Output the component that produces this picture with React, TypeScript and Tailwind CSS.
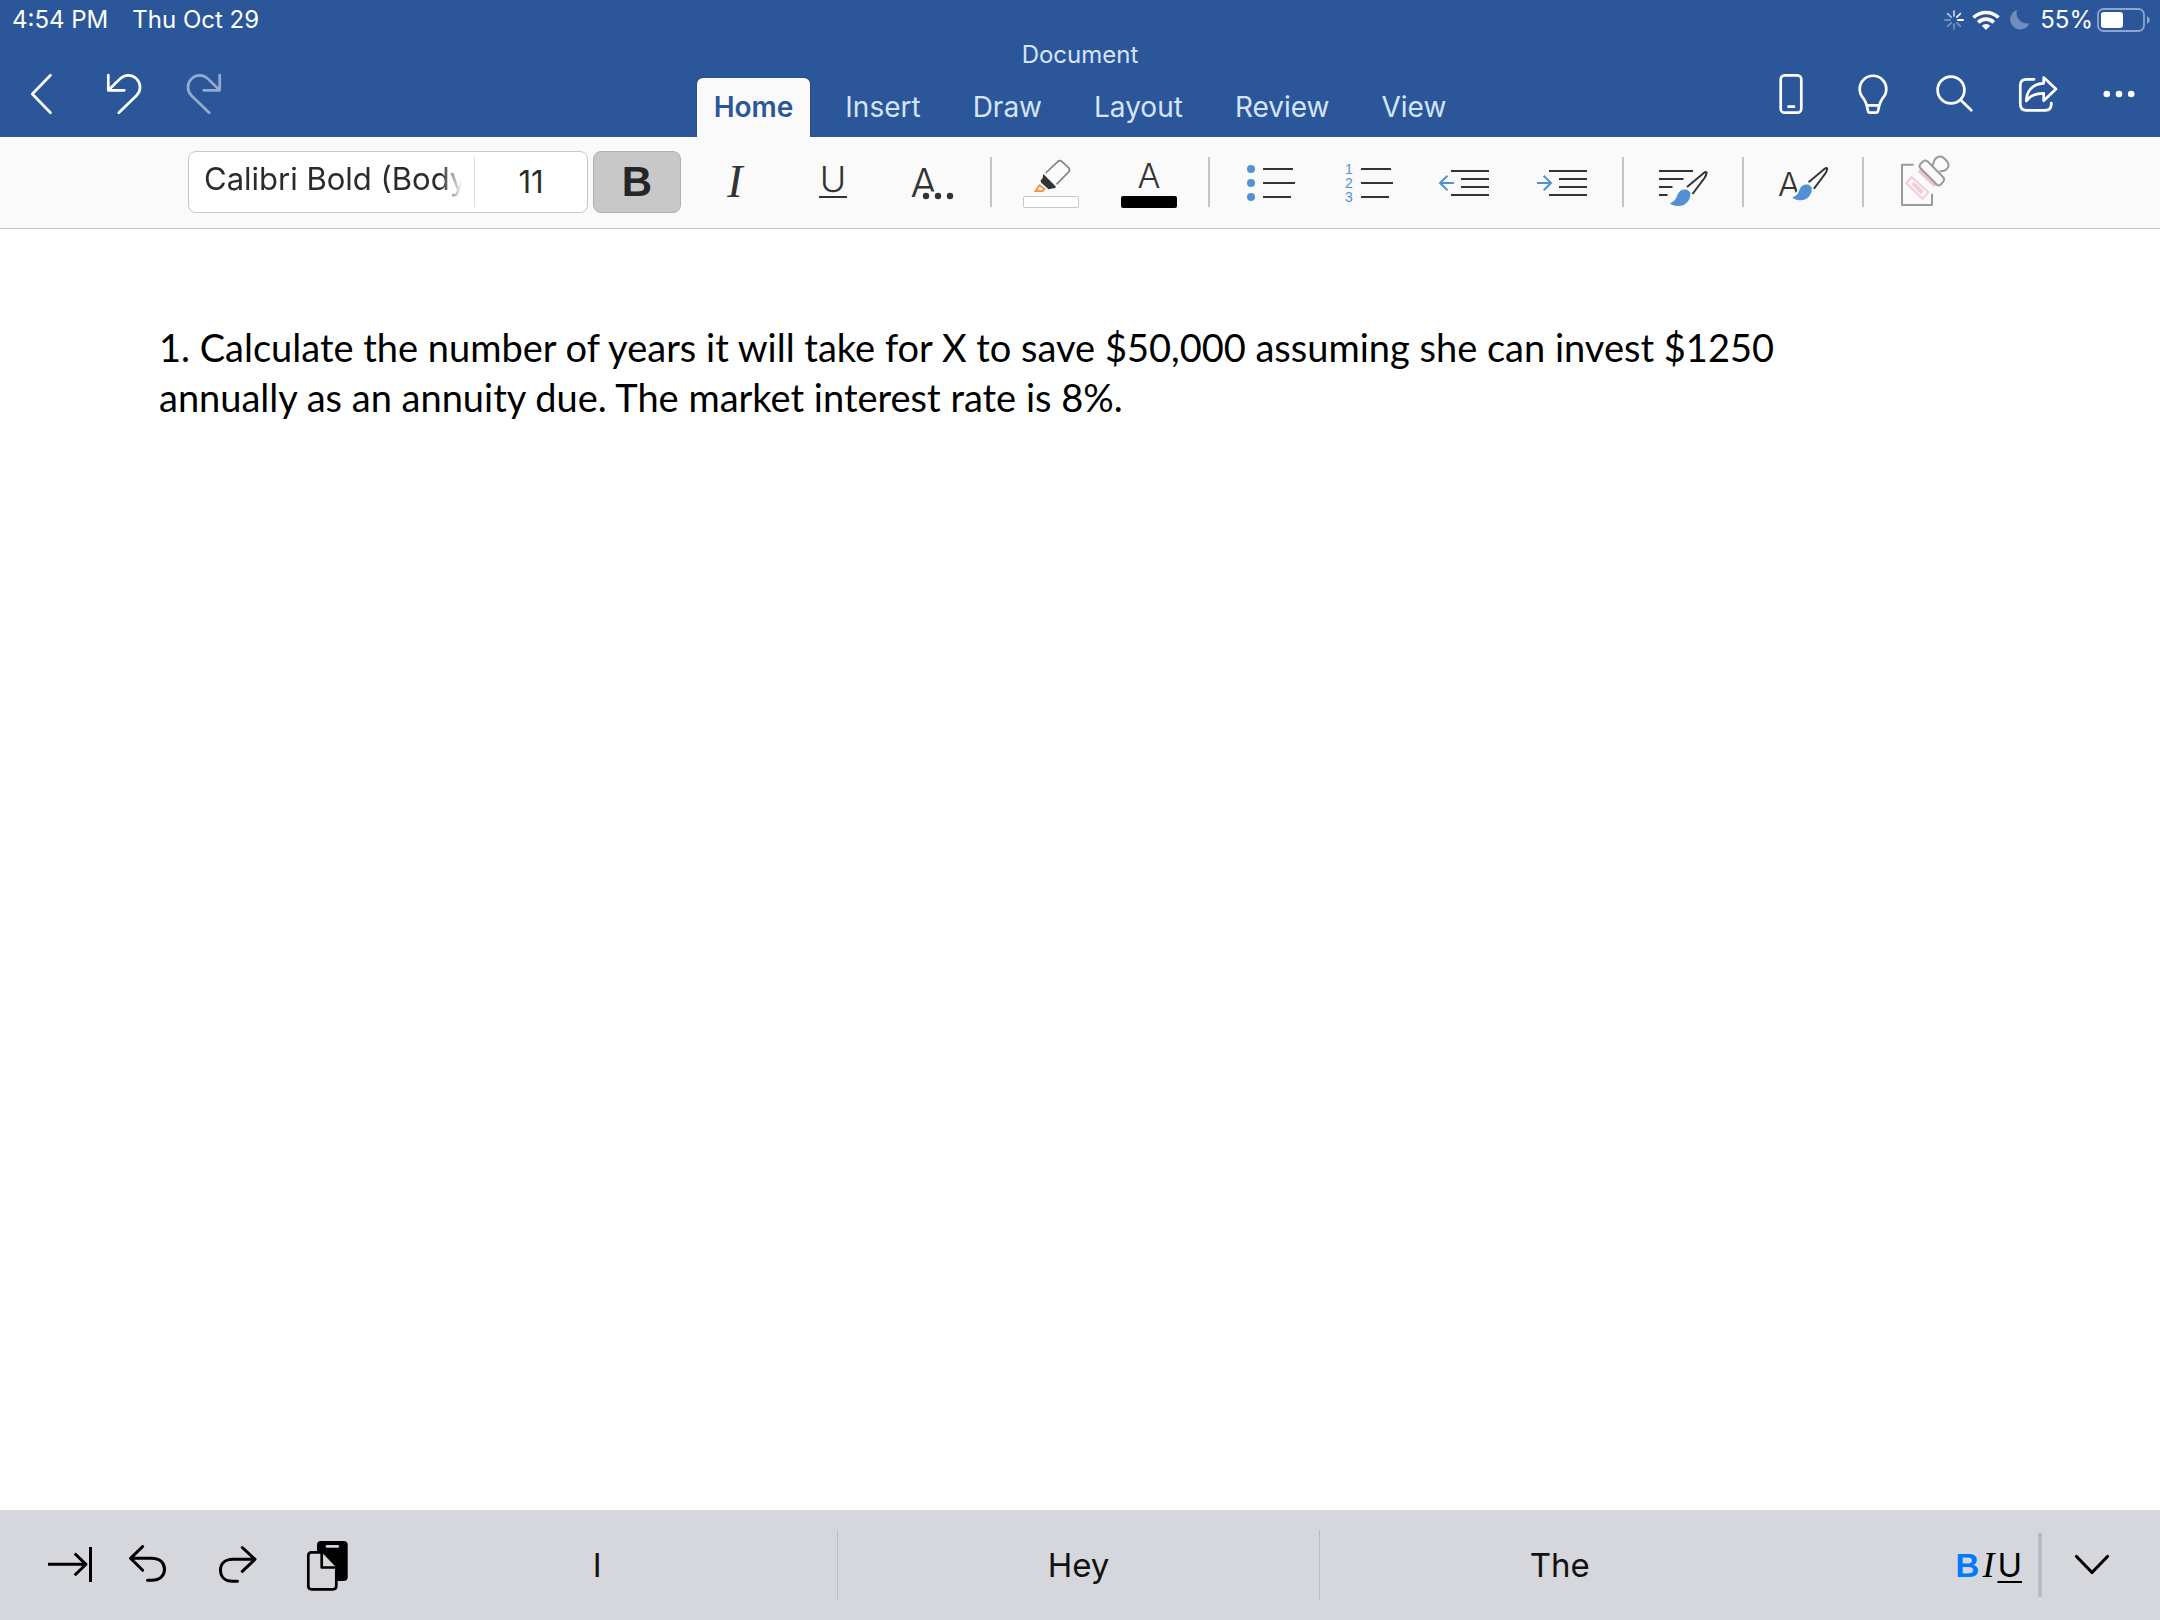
import type { ReactNode } from "react"

const tabs = ["Home", "Insert", "Draw", "Layout", "Review", "View"]
const suggestions = ["I", "Hey", "The"]

function NavButton({ label, disabled, children }: { label: string; disabled?: boolean; children: ReactNode }) {
    return (
        <button aria-label={label} disabled={disabled} className="flex h-[82px] w-[82px] items-center justify-center disabled:opacity-50">
            <svg
                viewBox="0 0 40 40"
                className="h-10 w-10 overflow-visible"
                fill="none"
                stroke="#fff"
                strokeWidth="2.7"
                strokeLinecap="round"
                strokeLinejoin="round"
            >
                {children}
            </svg>
        </button>
    )
}

function ToolButton({ label, children }: { label: string; children: ReactNode }) {
    return (
        <button aria-label={label} className="h-[62px] w-[88px] shrink-0">
            <svg viewBox="0 0 88 62" className="h-full w-full" fill="none" stroke="#333" strokeWidth="2">
                {children}
            </svg>
        </button>
    )
}

function KeyIcon({ children }: { children: ReactNode }) {
    return (
        <svg
            viewBox="0 0 48 48"
            className="h-12 w-12 overflow-visible"
            fill="none"
            stroke="#000"
            strokeWidth="3"
            strokeLinecap="round"
            strokeLinejoin="round"
        >
            {children}
        </svg>
    )
}

function Separator() {
    return <div className="mx-[5px] h-[50px] w-0.5 shrink-0 bg-[#c4c4c4]" />
}

function Brush() {
    return (
        <>
            <path d="M48 36 L64.5 22.2 Q67.8 20 67.6 22 Q67.2 24.5 65.5 27 L53.5 43" />
            <path
                d="M30.8 52.2 C36 50.5 37 47.5 38.5 43.8 C40.2 39.5 44 37.7 48.2 38.8 L51.2 41.2 C52.3 48.5 47 55.5 38.5 55 C35.5 55 33 54 30.8 52.2Z"
                fill="#5291d3"
                stroke="none"
            />
        </>
    )
}

function StatusBar() {
    return (
        <div className="flex h-10 items-center justify-between pl-3 pr-[10px] text-[24px] leading-10 text-white">
            <div className="flex gap-6">
                <span>4:54 PM</span>
                <span>Thu Oct 29</span>
            </div>
            <div className="flex items-center gap-1">
                <svg viewBox="0 0 20 20" className="mr-1 h-5 w-5" stroke="#fff" strokeWidth="1.7" strokeLinecap="round">
                    <path d="M10 1V6" opacity=".75" />
                    <path d="M16.4 3.6L12.8 7.2" opacity=".9" />
                    <path d="M14 10H19" strokeWidth="2" />
                    <path d="M12.8 12.8L16.4 16.4M10 14V19M7.2 12.8L3.6 16.4" opacity=".35" />
                    <path d="M6 10H1" opacity=".45" />
                    <path d="M7.2 7.2L3.6 3.6" opacity=".6" />
                </svg>
                <svg viewBox="0 0 28 20" className="h-5 w-7" fill="none" stroke="#fff" strokeWidth="3.6">
                    <path d="M1.5 7.6A17.7 17.7 0 0 1 26.5 7.6" />
                    <path d="M6.2 12.4A11 11 0 0 1 21.8 12.4" />
                    <path d="M14 20L9.8 15.8A6 6 0 0 1 18.2 15.8Z" fill="#fff" stroke="none" />
                </svg>
                <svg viewBox="0 0 20 20" className="mx-1.5 h-5 w-5" fill="#6f8dbd">
                    <path d="M7 0A10 10 0 1 0 19.5 13.2A10.5 10.5 0 0 1 7 0Z" />
                </svg>
                <span>55%</span>
                <svg viewBox="0 0 53 24" className="h-6 w-[53px]">
                    <rect x="1" y="1" width="46" height="22" rx="5.5" fill="none" stroke="#8ca5cc" strokeWidth="1.8" />
                    <rect x="4" y="4" width="22" height="16" rx="3" fill="#fff" />
                    <path d="M50 8Q52.8 9.5 52.8 12T50 16Z" fill="#8ca5cc" />
                </svg>
            </div>
        </div>
    )
}

function Header() {
    return (
        <header className="bg-[#2b579a]">
            <StatusBar />
            <div className="grid h-[97px] grid-cols-[1fr_auto_1fr]">
                <div className="flex pt-[13px]">
                    <NavButton label="Back">
                        <path d="M29.5 1.3L11.3 20L29.5 38.7" />
                    </NavButton>
                    <NavButton label="Undo">
                        <path d="M5.3 1V16.3H21.3M5.3 16.3L17 4.9A11.7 11.7 0 1 1 33.6 21.5L15.8 38.7" />
                    </NavButton>
                    <NavButton label="Redo" disabled>
                        <path d="M34.7 1V16.3H18.7M34.7 16.3L23 4.9A11.7 11.7 0 1 0 6.4 21.5L24.2 38.7" />
                    </NavButton>
                </div>
                <div className="flex flex-col items-center">
                    <h1 className="h-[38px] text-[24px] leading-[30px] text-[#d5e4fb]">Document</h1>
                    <nav className="flex gap-[18px]">
                        {tabs.map((tab) => (
                            <a
                                key={tab}
                                href="#"
                                className={
                                    tab === "Home"
                                        ? "h-[59px] rounded-t-md bg-[#fafafa] px-[17px] text-[28px] font-semibold leading-[58px] text-[#2b579a] shadow-[0_0_2px_#1c3f78]"
                                        : "h-[59px] px-[17px] text-[28px] leading-[58px] text-[#d5e4fb]"
                                }
                            >
                                {tab}
                            </a>
                        ))}
                    </nav>
                </div>
                <div className="flex justify-end pt-[13px]">
                    <NavButton label="Mobile view">
                        <rect x="9.7" y="1.3" width="20.6" height="37.4" rx="4" />
                        <path d="M17.5 32.7H23" />
                    </NavButton>
                    <NavButton label="Tell me">
                        <path d="M13.7 31.3C13 28 11.5 26 10 23.8A13.3 13.3 0 1 1 30 23.8C28.5 26 27 28 26.3 31.3L25 37Q24.6 38.7 23 38.7H17Q15.4 38.7 15 37ZM13.7 31.3H26.3" />
                    </NavButton>
                    <NavButton label="Search">
                        <circle cx="16" cy="16" r="13.4" />
                        <path d="M25.7 26L36.3 36.3" />
                    </NavButton>
                    <NavButton label="Share">
                        <path d="M17 5.3H9.3Q3.3 5.3 3.3 11.3V30.3Q3.3 36.3 9.3 36.3H28.3Q34.3 36.3 34.3 30.3V29" />
                        <path d="M26.7 3.6L39 15L26.7 26.8V19.3C19 19.3 13 21.5 9.3 27C9.5 17 15.5 9.8 26.7 9.3Z" />
                    </NavButton>
                    <NavButton label="More">
                        <g fill="#fff" stroke="none">
                            <circle cx="7.8" cy="20" r="3.3" />
                            <circle cx="20" cy="20" r="3.3" />
                            <circle cx="32.2" cy="20" r="3.3" />
                        </g>
                    </NavButton>
                </div>
            </div>
        </header>
    )
}

function Toolbar() {
    return (
        <div className="flex h-[92px] items-center gap-[10px] border-b border-[#c8c8c8] bg-[#fafafa] pb-px pl-[188px]">
            <div className="-mr-[5px] flex h-[62px] w-[400px] shrink-0 items-center rounded-lg border border-[#c8c8c8] bg-white text-[31px] text-[#2b2b2b]">
                <button
                    aria-label="Font"
                    className="ml-[15px] h-full w-[258px] whitespace-nowrap pb-1.5 text-left [mask-image:linear-gradient(to_right,#000_92%,transparent)]"
                >
                    Calibri Bold (Body
                </button>
                <button aria-label="Font size" className="ml-3 h-[50px] flex-1 border-l border-[#dedede]">
                    11
                </button>
            </div>
            <button
                aria-pressed="true"
                className="h-[62px] w-[88px] shrink-0 rounded-lg border border-[#b0b0b0] bg-[#c8c8c8] font-['Liberation_Sans',sans-serif] text-[42px] font-bold leading-[60px] text-[#262626]"
            >
                B
            </button>
            <ToolButton label="Italic">
                <text x="44" y="46" textAnchor="middle" fontSize="46" fontStyle="italic" fontFamily="Liberation Serif, serif" fill="#333" stroke="none">
                    I
                </text>
            </ToolButton>
            <ToolButton label="Underline">
                <text x="44" y="41" textAnchor="middle" fontSize="36" fontWeight="300" fill="#333" stroke="none">
                    U
                </text>
                <path d="M30 46H58" />
            </ToolButton>
            <ToolButton label="More formatting">
                <text x="37" y="46" textAnchor="middle" fontSize="40" fontWeight="300" fill="#333" stroke="none">
                    A
                </text>
                <path d="M35 44H54" stroke="#fafafa" strokeWidth="7" />
                <g fill="#333" stroke="none">
                    <circle cx="39" cy="45" r="3.2" />
                    <circle cx="51" cy="45" r="3.2" />
                    <circle cx="63" cy="45" r="3.2" />
                </g>
            </ToolButton>
            <Separator />
            <ToolButton label="Highlight">
                <path d="M38.7 22L51 10.3Q53 9 55 10.7L61.5 16.5Q63.3 18.5 62 20.5L49.5 33.3" stroke="#808080" strokeWidth="1.7" />
                <path d="M36.3 23L49 35.8L48 37L41.5 38.3L33.8 31.3V29L35.5 27.5Z" fill="#333" stroke="none" />
                <path d="M32.5 34.3L28.5 40H35.7L37.5 38Z" stroke="#f4954a" strokeWidth="1.8" />
                <rect x="16.5" y="45.5" width="55" height="11" rx="1.5" fill="#fff" stroke="#c8c8c8" strokeWidth="1" />
            </ToolButton>
            <ToolButton label="Font color">
                <text x="44" y="37" textAnchor="middle" fontSize="34" fontWeight="300" fill="#333" stroke="none">
                    A
                </text>
                <rect x="16" y="45" width="56" height="12" rx="2" fill="#000" stroke="none" />
            </ToolButton>
            <Separator />
            <ToolButton label="Bullets">
                <g fill="#5291d3" stroke="none">
                    <circle cx="26" cy="18" r="4" />
                    <circle cx="26" cy="32" r="4" />
                    <circle cx="26" cy="46" r="4" />
                </g>
                <path d="M38 18H68M38 32H70M38 46H66" />
            </ToolButton>
            <ToolButton label="Numbering">
                <g fill="#5291d3" stroke="none" fontSize="14" textAnchor="middle" fontFamily="Liberation Sans, sans-serif">
                    <text x="26" y="23">1</text>
                    <text x="26" y="37">2</text>
                    <text x="26" y="51">3</text>
                </g>
                <path d="M38 18H68M38 32H70M38 46H66" />
            </ToolButton>
            <ToolButton label="Decrease indent">
                <path d="M30 20H68M40 28H68M40 36H68M30 44H68" />
                <path d="M33 32H19M26.5 24.7L19 32L26.5 39.3" stroke="#5291d3" />
            </ToolButton>
            <ToolButton label="Increase indent">
                <path d="M30 20H68M40 28H68M40 36H68M30 44H68" />
                <path d="M18 32H32M24.7 24.7L32 32L24.7 39.3" stroke="#5291d3" />
            </ToolButton>
            <Separator />
            <ToolButton label="Paragraph formatting">
                <path d="M20 20H54M20 28H44.5M20 36H33.5M20 44H28.5" />
                <Brush />
            </ToolButton>
            <Separator />
            <ToolButton label="Styles">
                <text x="30" y="45" textAnchor="middle" fontSize="33" fontWeight="300" fill="#333" stroke="none">
                    A
                </text>
                <g transform="translate(4 -3) scale(.95)">
                    <path d="M30 52C35 50 37 47 38.5 43.8C40 39.5 44 37 49 38.5V47H38Z" fill="#fafafa" stroke="#fafafa" strokeWidth="3" />
                    <Brush />
                </g>
            </ToolButton>
            <Separator />
            <ToolButton label="Format painter">
                <g stroke="#9a9a9a" strokeLinejoin="round">
                    <path d="M34.6 13.7H23V54H53V42.7" />
                    <path d="M32.6 26L49.3 41.3L43.6 47.7L27.3 32.3Z" stroke="#f3cdd6" />
                    <path d="M35 30.7L44.7 40.3L41.8 43L32.3 33.3Z" fill="#f3cdd6" stroke="none" />
                    <path d="M41.5 17.3L57.8 33.3L55 36L38.8 20.7Z" fill="#f0c3ce" stroke="none" />
                    <path d="M41.3 17L58 33.8Q60 35.3 61.5 33.8L64.5 30.3Q66 28 64 26L48.5 10.3Q46.5 8.7 44.5 10L41.3 13Q39.8 15 41.3 17Z" />
                    <path d="M53.5 15L55.3 9.5Q56 7.5 58 6.5Q61.5 4.3 64.5 6.7L68 10.3Q71 14 68.3 17.3Q67 19.3 65 19.7L60.5 20.5" />
                </g>
            </ToolButton>
        </div>
    )
}

function KeyboardBar() {
    return (
        <footer className="flex h-[110px] items-center bg-[#d5d7dc] text-black">
            <button aria-label="Tab" className="ml-[38px] flex w-16 justify-center">
                <KeyIcon>
                    <path d="M2 23.3H40M28.7 12.5L40 23.3L28.7 34.3M44.5 6V41" strokeLinecap="butt" />
                </KeyIcon>
            </button>
            <button aria-label="Undo typing" className="flex w-[90px] justify-center">
                <KeyIcon>
                    <path d="M19.7 5.5L7.5 17.3L19.7 29.3M7.5 17.3H28.7C37 17.3 41.5 22 41.5 28.3S37 39.3 28.7 39.3H24.5" />
                </KeyIcon>
            </button>
            <button aria-label="Redo typing" className="flex w-[90px] justify-center">
                <KeyIcon>
                    <path d="M29.3 6.5L42 18.3L29.3 30.3M42 18.3H20C11.7 18.3 7.5 23 7.5 29.3S11.7 40.3 20 40.3H24.5" />
                </KeyIcon>
            </button>
            <button aria-label="Paste" className="flex w-[75px] justify-end pr-[6px]">
                <KeyIcon>
                    <rect x="14" y="0" width="30.7" height="40" rx="4" fill="#000" stroke="none" />
                    <path d="M24 5.4H34.7" stroke="#d5d7dc" strokeWidth="2.6" />
                    <path d="M18.7 11.3L33.3 26.5V45Q33.3 48.3 30 48.3H8.6Q5.3 48.3 5.3 45V14.6Q5.3 11.3 8.6 11.3Z" fill="#d5d7dc" stroke="none" />
                    <path d="M18.7 11.3H8.6Q5.3 11.3 5.3 14.6V45Q5.3 48.3 8.6 48.3H30Q33.3 48.3 33.3 45V26.5H18.7V11.3" strokeWidth="2.7" />
                </KeyIcon>
            </button>
            <div className="flex flex-1 divide-x divide-[#bcbec3]">
                {suggestions.map((word) => (
                    <button key={word} className="h-[70px] flex-1 pt-0.5 text-[33px] text-[#111]">
                        {word}
                    </button>
                ))}
            </div>
            <div className="flex w-[360px] items-center justify-end">
                <button aria-label="Text style" className="mr-4 flex items-baseline gap-[3px] text-[33px] leading-10">
                    <b className="font-['Liberation_Sans',sans-serif] text-[#007aff]">B</b>
                    <i className="font-['Liberation_Serif',serif] text-[36px]">I</i>
                    <u className="decoration-2 underline-offset-4">U</u>
                </button>
                <div className="h-16 w-1 bg-[#bbbcc1]" />
                <button aria-label="Hide keyboard" className="flex w-[118px] justify-center pr-[18px]">
                    <KeyIcon>
                        <path d="M8.5 15.5L24 31.5L39.5 15.5" strokeWidth="3.2" />
                    </KeyIcon>
                </button>
            </div>
        </footer>
    )
}

export default function App() {
    return (
        <div className="flex min-h-screen flex-col bg-white font-['Inter',sans-serif]">
            <Header />
            <Toolbar />
            <main className="flex-1 px-[159px] pt-[93px]">
                <p className="font-['Lato',sans-serif] text-[38px] leading-[50px] text-black">
                    1. Calculate the number of years it will take for X to save $50,000 assuming she can invest $1250
                    <br />
                    annually as an annuity due. The market interest rate is 8%.
                </p>
            </main>
            <KeyboardBar />
        </div>
    )
}
